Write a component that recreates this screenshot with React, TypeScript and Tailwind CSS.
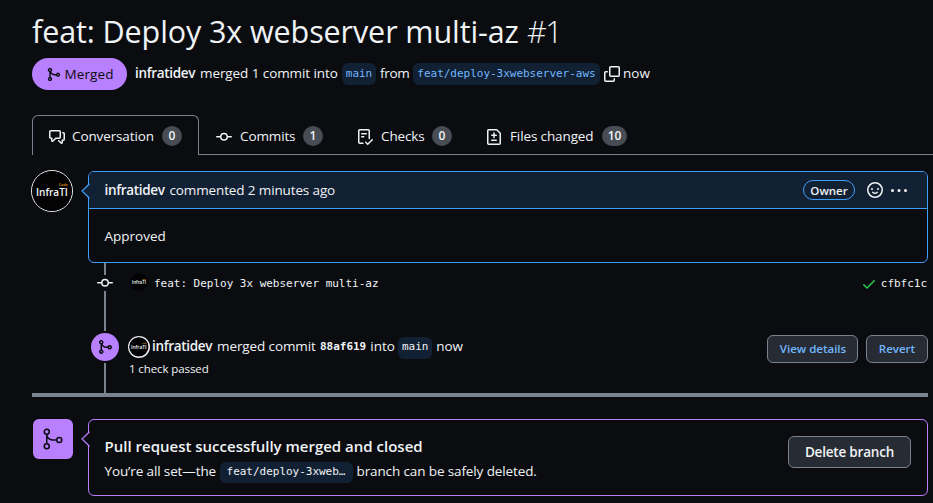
import type { ReactNode } from "react";

const paths = {
  merge:
    "M5.45 5.154A4.25 4.25 0 0 0 9.25 7.5h1.378a2.251 2.251 0 1 1 0 1.5H9.25A5.734 5.734 0 0 1 5 7.123v3.505a2.25 2.25 0 1 1-1.5 0V5.372a2.25 2.25 0 1 1 1.95-.218ZM4.25 13.5a.75.75 0 1 0 0-1.5.75.75 0 0 0 0 1.5Zm8.5-4.5a.75.75 0 1 0 0-1.5.75.75 0 0 0 0 1.5ZM5 3.25a.75.75 0 1 0 0 .005V3.25Z",
  discussion:
    "M1.75 1h8.5c.966 0 1.75.784 1.75 1.75v5.5A1.75 1.75 0 0 1 10.25 10H7.061l-2.574 2.573A1.458 1.458 0 0 1 2 11.543V10h-.25A1.75 1.75 0 0 1 0 8.25v-5.5C0 1.784.784 1 1.75 1ZM1.5 2.75v5.5c0 .138.112.25.25.25h1a.75.75 0 0 1 .75.75v2.19l2.72-2.72a.749.749 0 0 1 .53-.22h3.5a.25.25 0 0 0 .25-.25v-5.5a.25.25 0 0 0-.25-.25h-8.5a.25.25 0 0 0-.25.25Zm13 2a.25.25 0 0 0-.25-.25h-.5a.75.75 0 0 1 0-1.5h.5c.966 0 1.75.784 1.75 1.75v5.5A1.75 1.75 0 0 1 14.25 12H14v1.543a1.458 1.458 0 0 1-2.487 1.03L9.22 12.28a.749.749 0 0 1 .326-1.275.749.749 0 0 1 .734.215l2.22 2.22v-2.19a.75.75 0 0 1 .75-.75h1a.25.25 0 0 0 .25-.25Z",
  commit:
    "M11.93 8.5a4.002 4.002 0 0 1-7.86 0H.75a.75.75 0 0 1 0-1.5h3.32a4.002 4.002 0 0 1 7.86 0h3.32a.75.75 0 0 1 0 1.5Zm-1.43-.75a2.5 2.5 0 1 0-5 0 2.5 2.5 0 0 0 5 0Z",
  checklist:
    "M2.5 1.75v11.5c0 .138.112.25.25.25h3.17a.75.75 0 0 1 0 1.5H2.75A1.75 1.75 0 0 1 1 13.25V1.75C1 .784 1.784 0 2.75 0h8.5C12.216 0 13 .784 13 1.75v7.736a.75.75 0 0 1-1.5 0V1.75a.25.25 0 0 0-.25-.25h-8.5a.25.25 0 0 0-.25.25Zm13.274 9.537v-.001l-4.557 4.45a.75.75 0 0 1-1.055-.008l-1.943-1.95a.75.75 0 0 1 1.062-1.058l1.419 1.425 4.026-3.932a.75.75 0 1 1 1.048 1.074ZM4.75 4h4.5a.75.75 0 0 1 0 1.5h-4.5a.75.75 0 0 1 0-1.5ZM4 7.75A.75.75 0 0 1 4.75 7h2a.75.75 0 0 1 0 1.5h-2A.75.75 0 0 1 4 7.75Z",
  fileDiff:
    "M1 1.75C1 .784 1.784 0 2.75 0h7.586c.464 0 .909.184 1.237.513l2.914 2.914c.329.328.513.773.513 1.237v9.586A1.75 1.75 0 0 1 13.25 16H2.75A1.75 1.75 0 0 1 1 14.25Zm1.75-.25a.25.25 0 0 0-.25.25v12.5c0 .138.112.25.25.25h10.5a.25.25 0 0 0 .25-.25V4.664a.25.25 0 0 0-.073-.177l-2.914-2.914a.25.25 0 0 0-.177-.073ZM8 3.25a.75.75 0 0 1 .75.75v1.5h1.5a.75.75 0 0 1 0 1.5h-1.5v1.5a.75.75 0 0 1-1.5 0V7h-1.5a.75.75 0 0 1 0-1.5h1.5V4A.75.75 0 0 1 8 3.25Zm-3 8a.75.75 0 0 1 .75-.75h4.5a.75.75 0 0 1 0 1.5h-4.5a.75.75 0 0 1-.75-.75Z",
  copy:
    "M0 6.75C0 5.784.784 5 1.75 5h1.5a.75.75 0 0 1 0 1.5h-1.5a.25.25 0 0 0-.25.25v7.5c0 .138.112.25.25.25h7.5a.25.25 0 0 0 .25-.25v-1.5a.75.75 0 0 1 1.5 0v1.5A1.75 1.75 0 0 1 9.25 16h-7.5A1.75 1.75 0 0 1 0 14.25ZM5 1.75C5 .784 5.784 0 6.75 0h7.5C15.216 0 16 .784 16 1.75v7.5A1.75 1.75 0 0 1 14.25 11h-7.5A1.75 1.75 0 0 1 5 9.25Zm1.75-.25a.25.25 0 0 0-.25.25v7.5c0 .138.112.25.25.25h7.5a.25.25 0 0 0 .25-.25v-7.5a.25.25 0 0 0-.25-.25Z",
  smiley:
    "M8 0a8 8 0 1 1 0 16A8 8 0 0 1 8 0ZM1.5 8a6.5 6.5 0 1 0 13 0 6.5 6.5 0 0 0-13 0Zm3.82 1.636a.75.75 0 0 1 1.038.175l.007.009c.103.118.22.222.35.31.264.178.683.37 1.285.37.602 0 1.02-.192 1.285-.371.13-.088.247-.192.35-.31l.007-.008a.75.75 0 0 1 1.213.883c-.2.26-.45.49-.728.673-.63.418-1.37.638-2.127.629-.946 0-1.652-.308-2.126-.63a3.331 3.331 0 0 1-.729-.683.75.75 0 0 1 .175-1.057ZM12 7a1 1 0 1 1-2 0 1 1 0 0 1 2 0ZM5 8a1 1 0 1 1 0-2 1 1 0 0 1 0 2Z",
  kebab:
    "M8 9a1.5 1.5 0 1 0 0-3 1.5 1.5 0 0 0 0 3ZM1.5 9a1.5 1.5 0 1 0 0-3 1.5 1.5 0 0 0 0 3Zm13 0a1.5 1.5 0 1 0 0-3 1.5 1.5 0 0 0 0 3Z",
  check:
    "M13.78 4.22a.75.75 0 0 1 0 1.06l-7.25 7.25a.75.75 0 0 1-1.06 0L2.22 9.28a.751.751 0 0 1 .018-1.042.751.751 0 0 1 1.042-.018L6 10.94l6.72-6.72a.75.75 0 0 1 1.06 0Z",
};

function Icon({ name, className = "size-4" }: { name: keyof typeof paths; className?: string }) {
  return (
    <svg viewBox="0 0 16 16" fill="currentColor" className={`shrink-0 ${className}`} aria-hidden="true">
      <path d={paths[name]} />
    </svg>
  );
}

function Mono({ children, className = "" }: { children: ReactNode; className?: string }) {
  return (
    <span className={`shrink-0 font-['DejaVu_Sans_Mono',monospace] text-[11px] tracking-[-0.02px] ${className}`}>
      {children}
    </span>
  );
}

function Avatar({ className }: { className: string }) {
  return (
    <svg viewBox="0 0 42 42" className={`shrink-0 rounded-full ${className}`} aria-hidden="true">
      <circle cx="21" cy="21" r="21" fill="#030303" />
      <text x="4.2" y="26" textLength="33.5" lengthAdjust="spacingAndGlyphs" fill="#f0f3f6" fontSize="12" fontWeight="600" fontFamily="Open Sans, sans-serif">
        InfraTI
      </text>
      <text x="28" y="15.4" textLength="9.5" lengthAdjust="spacingAndGlyphs" fill="#c9800f" fontSize="4.4" fontWeight="700" fontFamily="Open Sans, sans-serif">
        Code
      </text>
    </svg>
  );
}

function Tab({ icon, label, count, width, pill = "w-5", active = false }: {
  icon: keyof typeof paths;
  label: string;
  count: number;
  width: string;
  pill?: string;
  active?: boolean;
}) {
  return (
    <div
      className={`flex h-10 items-center gap-2 border-[#7a828e] ${
        active ? "rounded-t-md border-x border-t px-4 pb-px" : "border-b px-[17px] pt-px"
      }`}
    >
      <Icon name={icon} className="mt-1 size-4" />
      <span className={`mt-0.5 whitespace-nowrap text-[13.5px] tracking-[-0.12px] ${active ? "-ml-px mr-px" : ""} ${width}`}>{label}</span>
      <span className={`mt-0.5 flex h-5 items-center justify-center rounded-full bg-[#484c54] text-[12px] font-semibold ${pill}`}>
        {count}
      </span>
    </div>
  );
}

function Caret({ stroke, fill }: { stroke: string; fill: string }) {
  return (
    <svg viewBox="0 0 9 16" className="absolute -left-2 top-[11px] h-4 w-[9px]" aria-hidden="true">
      <path d="M9 0 L1 8 L9 16Z" fill={fill} />
      <path d="M8.5 0.7 L1 8 L8.5 15.3" fill="none" stroke={stroke} strokeWidth="1.2" />
    </svg>
  );
}

export default function App() {
  return (
    <div className="h-[503px] w-[933px] overflow-hidden bg-[#0a0c10] font-['Open_Sans',sans-serif] text-[13.5px] text-[#f0f3f6]">
      <header className="pl-8">
        <h1 className="flex h-[58px] items-center gap-[7px] whitespace-nowrap pt-[5px] text-[30.5px] leading-none">
          <span className="w-[488px] tracking-[-0.1px]">feat: Deploy 3x webserver multi-az</span>
          <span className="font-light tracking-[-1.5px]">#1</span>
        </h1>
        <div className="flex h-8 items-center whitespace-nowrap">
          <span className="flex h-8 w-[95px] items-center rounded-full bg-[#b87fff] pl-[13.5px] text-[#0a0c10]">
            <Icon name="merge" className="mt-px size-[15px]" />
            <span className="ml-1 mt-px tracking-[0.1px]">Merged</span>
          </span>
          <span className="-mt-0.5 ml-2 w-[61px] font-semibold tracking-[-0.32px]">infratidev</span>
          <span className="-mt-0.5 ml-1 w-[138px] tracking-[-0.08px]">merged 1 commit into</span>
          <Mono className="ml-1 flex h-[22px] w-[34px] items-center justify-center rounded-md bg-[#122033] text-[#71b7ff]">main</Mono>
          <span className="-mt-0.5 ml-1 w-[29px] tracking-[-0.3px]">from</span>
          <Mono className="ml-1 flex h-[22px] w-[187px] items-center justify-center rounded-md bg-[#122033] text-[#71b7ff]">
            feat/deploy-3xwebserver-aws
          </Mono>
          <Icon name="copy" className="ml-1 size-4" />
          <span className="-mt-0.5 ml-[3px]">now</span>
        </div>
        <nav className="mt-[25px] flex">
          <Tab icon="discussion" label="Conversation" count={0} width="w-[81px]" active />
          <Tab icon="commit" label="Commits" count={1} width="w-[55px]" />
          <Tab icon="checklist" label="Checks" count={0} width="w-[43px]" />
          <Tab icon="fileDiff" label="Files changed" count={10} width="w-[84px]" pill="w-[25px]" />
          <div className="grow border-b border-[#7a828e]" />
        </nav>
      </header>

      <main className="pl-[31px] pr-[5px] pt-[15px]">
        <section className="flex gap-[15px]">
          <div className="size-[42px] shrink-0 rounded-full border border-[#e8eaec]">
            <Avatar className="size-10" />
          </div>
          <div className="relative mt-px h-[92px] grow rounded-md border border-[#409eff]">
            <div className="flex h-[37px] items-center rounded-t-[5px] border-b border-[#409eff] bg-[#122033] pl-[15.5px] pr-5">
              <span className="w-[61px] font-semibold tracking-[-0.32px]">infratidev</span>
              <span className="ml-1 whitespace-nowrap tracking-[-0.13px]">commented 2 minutes ago</span>
              <span className="ml-auto flex h-5 w-[52px] items-center justify-center rounded-full border border-[#409eff] pt-px text-[11.5px] font-semibold">
                Owner
              </span>
              <Icon name="smiley" className="ml-3 size-4" />
              <Icon name="kebab" className="ml-2 mt-0.5 size-4" />
            </div>
            <p className="pl-[15.5px] pt-[17px]">Approved</p>
            <Caret stroke="#409eff" fill="#122033" />
          </div>
        </section>

        <section className="flex h-[130px]">
          <div className="ml-[60px] flex w-7 shrink-0 flex-col items-center">
            <div className="h-3 w-0.5 shrink-0 bg-[#7a828e]" />
            <Icon name="commit" className="size-4" />
            <div className="h-10 w-0.5 shrink-0 bg-[#7a828e]" />
            <div className="my-0.5 flex size-7 shrink-0 items-center justify-center rounded-full bg-[#b87fff] text-[#0a0c10]">
              <Icon name="merge" className="size-4" />
            </div>
            <div className="w-0.5 grow bg-[#7a828e]" />
          </div>
          <div className="grow pl-[9px]">
            <div className="mt-[10px] flex h-[18px] items-center pl-0.5">
              <Avatar className="size-[18px]" />
              <Mono className="ml-[6px] mt-1">feat: Deploy 3x webserver multi-az</Mono>
              <Icon name="check" className="ml-auto mt-1 size-4 text-[#26cd4d]" />
              <Mono className="ml-1 mr-px mt-1">cfbfc1c</Mono>
            </div>
            <div className="mt-11 flex h-[28px] items-center">
              <div className="-mt-1 flex grow items-center whitespace-nowrap">
                <div className="flex size-[22px] shrink-0 items-center justify-center rounded-full bg-[#e8eaec]">
                  <Avatar className="size-[19.5px]" />
                </div>
                <span className="-mt-0.5 ml-0.5 w-[61px] font-semibold tracking-[-0.32px]">infratidev</span>
                <span className="-mt-0.5 ml-1 w-[99px] tracking-[-0.1px]">merged commit</span>
                <Mono className="ml-1 font-bold">88af619</Mono>
                <span className="-mt-0.5 ml-1 w-[24px]">into</span>
                <Mono className="ml-1 mt-px flex h-[22px] w-[34px] items-center justify-center rounded-md bg-[#122033]">main</Mono>
                <span className="-mt-0.5 ml-1">now</span>
              </div>
              <button className="h-7 w-[91px] shrink-0 rounded-md border border-[#7a828e] bg-[#272b33] pl-px text-[11.5px] font-semibold text-[#71b7ff]">
                View details
              </button>
              <button className="ml-2 h-7 w-[62px] shrink-0 rounded-md border border-[#7a828e] bg-[#272b33] text-[11.5px] font-semibold text-[#71b7ff]">
                Revert
              </button>
            </div>
            <p className="-mt-[3px] pl-px text-[11.5px] leading-[18px] tracking-[-0.1px]">1 check passed</p>
          </div>
        </section>
        <div className="ml-px h-1 bg-[#7a828e]" />

        <section className="mt-[22px] flex pl-0.5">
          <div className="flex size-10 shrink-0 items-center justify-center rounded-md bg-[#b87fff] text-[#0a0c10]">
            <svg viewBox="0 0 24 24" className="size-6" fill="none" stroke="currentColor" strokeWidth="1.5" aria-hidden="true">
              <circle cx="5.75" cy="4.75" r="2.5" />
              <circle cx="5.75" cy="19.25" r="2.5" />
              <circle cx="18.25" cy="13" r="2.5" />
              <path d="M5.75 7.25v9.5M5.75 7.25A5.75 5.75 0 0 0 11.5 13h4.25" />
            </svg>
          </div>
          <div className="relative ml-[15px] flex h-[77px] grow items-center justify-between rounded-md border border-[#b87fff] pl-[15.5px] pr-4">
            <div className="whitespace-nowrap pt-0.5">
              <h2 className="-mt-px text-[15px] font-semibold leading-6">Pull request successfully merged and closed</h2>
              <p className="mt-0.5 flex h-[23px] items-center">
                <span className="w-[111px] tracking-[-0.12px]">You’re all set—the</span>
                <Mono className="ml-1 mt-0.5 flex h-[21px] w-[133px] items-center justify-center rounded-md bg-[#122033]">
                  feat/deploy-3xweb…
                </Mono>
                <span className="ml-1 tracking-[-0.12px]">branch can be safely deleted.</span>
              </p>
            </div>
            <button className="-mt-[11px] h-8 w-[123px] rounded-md border border-[#7a828e] bg-[#272b33] pt-px text-[13.5px] font-semibold tracking-[-0.2px]">
              Delete branch
            </button>
            <Caret stroke="#b87fff" fill="#0a0c10" />
          </div>
        </section>
      </main>
    </div>
  );
}
